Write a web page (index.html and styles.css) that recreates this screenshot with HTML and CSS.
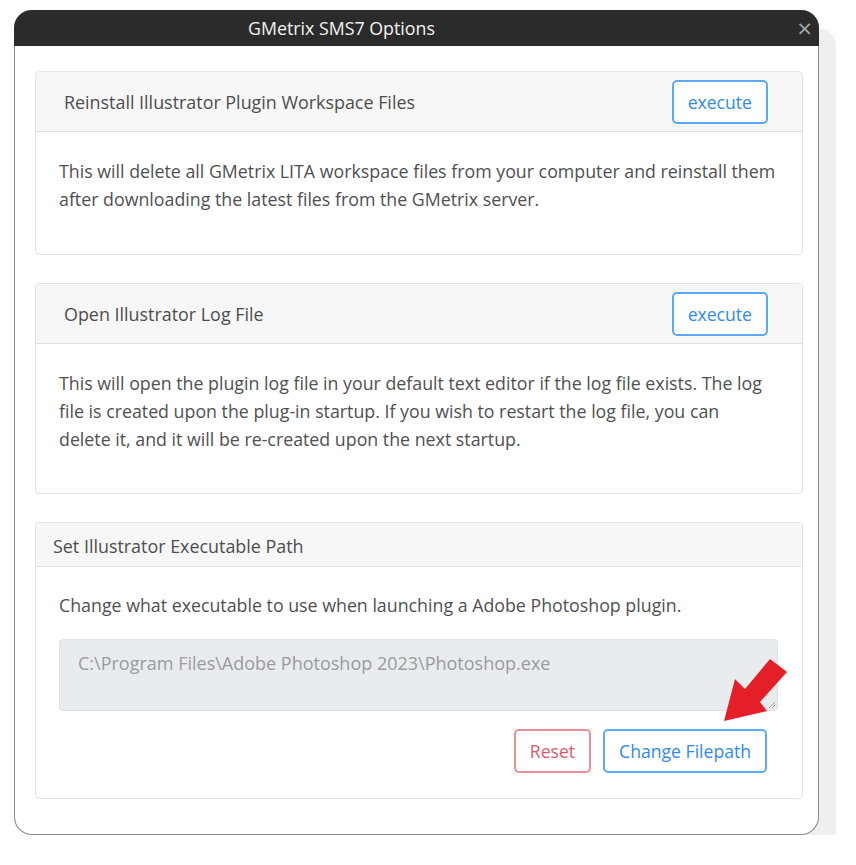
FILE: index.html
```html
<!DOCTYPE html>
<html>
<head>
<meta charset="utf-8">
<link rel="stylesheet" href="styles.css">
</head>
<body>
<div class="window">
  <div class="titlebar">
    <span class="title">GMetrix SMS7 Options</span>
    <span class="close">×</span>
  </div>
  <div class="content">
    <section class="card">
      <div class="card-header tall">
        <span class="header-text indent">Reinstall Illustrator Plugin Workspace Files</span>
        <button class="btn btn-blue">execute</button>
      </div>
      <div class="card-body">
        <p>This will delete all GMetrix LITA workspace files from your computer and reinstall them after downloading the latest files from the GMetrix server.</p>
      </div>
    </section>
    <section class="card">
      <div class="card-header tall">
        <span class="header-text indent">Open Illustrator Log File</span>
        <button class="btn btn-blue">execute</button>
      </div>
      <div class="card-body log-body">
        <p>This will open the plugin log file in your default text editor if the log file exists. The log file is created upon the plug-in startup. If you wish to restart the log file, you can<br>delete it, and it will be re-created upon the next startup.</p>
      </div>
    </section>
    <section class="card">
      <div class="card-header short">
        <span class="header-text">Set Illustrator Executable Path</span>
      </div>
      <div class="card-body path-body">
        <p>Change what executable to use when launching a Adobe Photoshop plugin.</p>
        <div class="pathbox">C:\Program Files\Adobe Photoshop 2023\Photoshop.exe
          <svg class="grip" width="10" height="10" viewBox="0 0 10 10"><path d="M9 3 L3 9 M9 6 L6 9" stroke="#9a9a9a" stroke-width="1" fill="none"/></svg>
        </div>
        <div class="actions">
          <button class="btn btn-red">Reset</button>
          <button class="btn btn-blue">Change Filepath</button>
        </div>
        <svg class="arrow" width="70" height="70" viewBox="0 0 70 70"><polygon points="0,62 11,20 21,30 46,0 63,13 36,43 43,52" fill="#e51f27"/></svg>
      </div>
    </section>
  </div>
</div>
</body>
</html>
```

FILE: styles.css
```css
* { box-sizing: border-box; }
html, body { margin: 0; padding: 0; background: #fff; }
body {
  font-family: "Open Sans", "Noto Sans", sans-serif;
  color: #505050;
  padding: 10px 0 0 14px;
}
.window {
  width: 805px;
  height: 825px;
  border: 1px solid #8a8a8a;
  border-top: none;
  border-radius: 18px;
  background: #fff;
  box-shadow: 17px 18px 2px 0 #efefef;
  display: flex;
  flex-direction: column;
}
.titlebar {
  height: 36px;
  background: #2b2b2b;
  border-radius: 18px 18px 0 0;
  margin: 0 -1px;
  display: flex;
  align-items: center;
  position: relative;
  padding-right: 150px;
}
.title {
  flex: 1;
  text-align: center;
  color: #f2f2f2;
  font-size: 17.8px;
}
.close {
  position: absolute;
  right: 6px;
  top: 6px;
  color: #a8a8a8;
  font-size: 20px;
  line-height: 24px;
  font-family: "DejaVu Sans", sans-serif;
}
.content {
  padding: 25px 15px 0 20px;
  display: flex;
  flex-direction: column;
  gap: 28px;
}
.card {
  border: 1px solid #e3e3e3;
  border-radius: 4px;
  background: #fff;
}
.card-header {
  background: #f7f7f7;
  border-bottom: 1px solid #e0e0e0;
  display: flex;
  align-items: center;
  justify-content: space-between;
  padding: 0 34px 0 17px;
  border-radius: 4px 4px 0 0;
}
.card-header.tall { height: 60px; }
.card-header.short { height: 44px; padding-top: 3px; }
.header-text { font-size: 17.9px; color: #4d4d4d; }
.header-text.indent { margin-left: 11px; }
.card-body {
  padding: 25px 21px 41px 23px;
}
.log-body { padding-bottom: 40px; }
.card-body p {
  margin: 0;
  font-size: 17.8px;
  line-height: 28px;
}
.btn {
  font-family: "Open Sans", "Noto Sans", sans-serif;
  font-size: 17.6px;
  background: #fff;
  border-radius: 5px;
  height: 44px;
  padding: 0 14px;
  cursor: pointer;
}
.btn-blue { border: 2px solid #5aa9ff; color: #2f8af0; }
.btn-red { border: 2px solid #ec8e96; color: #e0596a; }
.path-body { position: relative; padding: 24px 24px 25px 23px; }
.pathbox {
  margin-top: 20px;
  height: 72px;
  background: #e9ecef;
  border: 1px solid #dde1e5;
  border-radius: 4px;
  padding: 11px 18px;
  font-size: 18px;
  color: #9b9b9b;
  position: relative;
}
.grip { position: absolute; right: 1px; bottom: 1px; }
.actions {
  margin-top: 18px;
  display: flex;
  justify-content: flex-end;
  gap: 12px;
  padding-right: 11px;
}
.actions .btn { height: 44px; padding: 0 14px; }
.arrow { position: absolute; left: 688px; top: 92px; }
```
